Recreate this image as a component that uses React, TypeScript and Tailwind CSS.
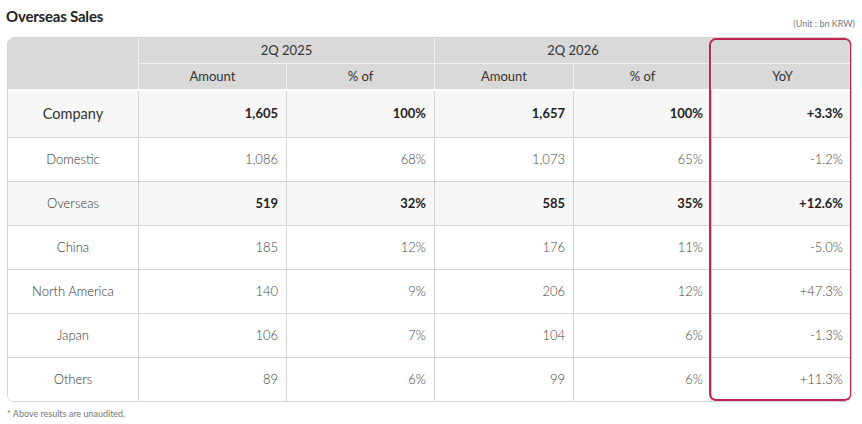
import React from "react";

interface Row {
  label: string;
  a1: string;
  p1: string;
  a2: string;
  p2: string;
  yoy: string;
  bold?: boolean;
  big?: boolean;
}

const rows: Row[] = [
  { label: "Company", a1: "1,605", p1: "100%", a2: "1,657", p2: "100%", yoy: "+3.3%", bold: true, big: true },
  { label: "Domestic", a1: "1,086", p1: "68%", a2: "1,073", p2: "65%", yoy: "-1.2%" },
  { label: "Overseas", a1: "519", p1: "32%", a2: "585", p2: "35%", yoy: "+12.6%", bold: true },
  { label: "China", a1: "185", p1: "12%", a2: "176", p2: "11%", yoy: "-5.0%" },
  { label: "North America", a1: "140", p1: "9%", a2: "206", p2: "12%", yoy: "+47.3%" },
  { label: "Japan", a1: "106", p1: "7%", a2: "104", p2: "6%", yoy: "-1.3%" },
  { label: "Others", a1: "89", p1: "6%", a2: "99", p2: "6%", yoy: "+11.3%" },
];

const cols = "grid grid-cols-[130px_148px_148px_139px_138px_142px]";

const App: React.FC = () => {
  return (
    <div className="w-[862px] h-[424px] bg-white px-[7px] font-['Lato',sans-serif] text-[#333]">
      {/* Title line */}
      <div className="flex items-end justify-between h-[37px] pb-[7px]">
        <h1 className="text-[15px] font-bold text-[#222] tracking-[-0.2px] -ml-px mb-[3px]">Overseas Sales</h1>
        <span className="text-[9px] text-[#777]">(Unit : bn KRW)</span>
      </div>

      {/* Table */}
      <div className="relative w-[845px] rounded-[7px] border border-[#d4d4d4] overflow-hidden">
        {/* Header */}
        <div className={`${cols} bg-[#d9d9d9] text-[13px] text-[#333] border-b-2 border-white`}>
          <div className="row-span-2" />
          <div className="col-span-2 h-[26px] flex items-center justify-center border-l border-[#f2f2f2] border-b border-b-[#f2f2f2]">2Q 2025</div>
          <div className="col-span-2 h-[26px] flex items-center justify-center border-l border-[#f2f2f2] border-b border-b-[#f2f2f2]">2Q 2026</div>
          <div className="h-[26px] border-l border-[#f2f2f2] border-b border-b-[#f2f2f2]" />
          <div className="h-[25px] flex items-center justify-center border-l border-[#f2f2f2]">Amount</div>
          <div className="h-[25px] flex items-center justify-center border-l border-[#f2f2f2]">% of</div>
          <div className="h-[25px] flex items-center justify-center border-l border-[#f2f2f2]">Amount</div>
          <div className="h-[25px] flex items-center justify-center border-l border-[#f2f2f2]">% of</div>
          <div className="h-[25px] flex items-center justify-center border-l border-[#f2f2f2]">YoY</div>
        </div>

        {/* Body */}
        {rows.map((r, i) => {
          const val = r.bold ? "font-bold text-[#222]" : "font-light text-[#444]";
          return (
            <div
              key={r.label}
              className={`${cols} text-[13px] ${r.bold ? "bg-[#f7f7f7]" : "bg-white"} ${
                i === 0 ? "h-[46px]" : "h-[44px] border-t border-[#d4d4d4]"
              }`}
            >
              <div className={`flex items-center justify-center text-[#333] ${r.big ? "text-[14.5px]" : "font-light"}`}>{r.label}</div>
              <div className={`flex items-center justify-end pr-[8px] border-l border-[#d4d4d4] ${val}`}>{r.a1}</div>
              <div className={`flex items-center justify-end pr-[8px] border-l border-[#d4d4d4] ${val}`}>{r.p1}</div>
              <div className={`flex items-center justify-end pr-[8px] border-l border-[#d4d4d4] ${val}`}>{r.a2}</div>
              <div className={`flex items-center justify-end pr-[8px] border-l border-[#d4d4d4] ${val}`}>{r.p2}</div>
              <div className={`flex items-center justify-end pr-[10px] border-l border-[#d4d4d4] ${val}`}>{r.yoy}</div>
            </div>
          );
        })}

        {/* YoY highlight */}
        <div className="absolute top-0 bottom-0 right-0 w-[143px] -mr-px rounded-[7px] border-2 border-[#c2244f] pointer-events-none" />
      </div>

      <p className="mt-[5px] text-[9px] text-[#777]">* Above results are unaudited.</p>
    </div>
  );
};

export default App;
